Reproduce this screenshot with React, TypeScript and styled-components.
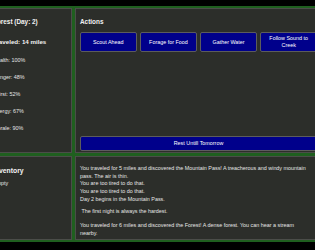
import styled, { createGlobalStyle } from "styled-components";

const GlobalStyle = createGlobalStyle`
  html, body {
    margin: 0;
    background: #000;
    overflow: hidden;
  }
  body {
    font-family: "Liberation Sans", Arial, sans-serif;
    color: #e6e6e6;
  }
`;

const Board = styled.div`
  box-sizing: border-box;
  width: 338px;
  margin: 6px 0 0 -14px;
  padding: 2px;
  display: grid;
  grid-template-columns: 84px 247px;
  grid-template-rows: 145px 84px;
  gap: 3px;
  background: #1f5f1f;
`;

const Panel = styled.section<{ $padBottom?: number; $padRight?: number; $end?: boolean }>`
  box-sizing: border-box;
  min-width: 0;
  min-height: 0;
  border: 1px solid #4b4d49;
  background: #2c2e2a;
  padding: 4px ${(p) => p.$padRight ?? 4}px ${(p) => p.$padBottom ?? 4}px 4px;
  display: flex;
  flex-direction: column;
  justify-content: ${(p) => (p.$end ? "flex-end" : "flex-start")};
  overflow: hidden;
`;

const Title = styled.div<{ $size?: number; $top?: number }>`
  font-size: ${(p) => p.$size ?? 6.4}px;
  font-weight: bold;
  line-height: 8px;
  color: #f2f2f2;
  margin-top: ${(p) => p.$top ?? 5.3}px;
  white-space: nowrap;
`;

const StatList = styled.div`
  margin-top: 6.2px;
`;

const Stat = styled.div`
  font-size: 5.4px;
  line-height: 17px;
  white-space: nowrap;
`;

const Note = styled.div`
  font-size: 5.4px;
  line-height: 7.5px;
  margin-top: 5.5px;
`;

const ActionRow = styled.div`
  margin-top: 5.7px;
  display: grid;
  grid-template-columns: repeat(4, 1fr);
  gap: 3.5px;
`;

const ActionButton = styled.button`
  height: 20px;
  box-sizing: border-box;
  background: #00008b;
  border: 1px solid #5c5c5c;
  border-radius: 2px;
  color: #fff;
  font-family: inherit;
  font-size: 5.4px;
  line-height: 6.5px;
  padding: 0 4px;
`;

const RestButton = styled(ActionButton)`
  height: 15px;
  margin-top: auto;
`;

const LogList = styled.div`
  flex-shrink: 0;
  display: flex;
  flex-direction: column;
`;

const Entry = styled.div<{ $gap?: number }>`
  font-size: 5.4px;
  line-height: 7.5px;
  white-space: pre-wrap;
  margin-top: ${(p) => p.$gap ?? 0}px;
`;

const stats = ["Health: 100%", "Hunger: 48%", "Thirst: 52%", "Energy: 67%", "Morale: 90%"];
const actions = ["Scout Ahead", "Forage for Food", "Gather Water", "Follow Sound to Creek"];

const log = [
  { text: "You set off along the winding trail and climbed the ridge, gaining height quickly as the morning passed by.", gap: 0 },
  { text: "You traveled for 5 miles and discovered the Mountain Pass! A treacherous and windy mountain pass. The air is thin.", gap: 7.8 },
  { text: "You are too tired to do that.", gap: 0 },
  { text: "You are too tired to do that.", gap: 0.3 },
  { text: "Day 2 begins in the Mountain Pass.", gap: 0.5 },
  { text: " The first night is always the hardest.", gap: 4.8 },
  { text: "You traveled for 6 miles and discovered the Forest! A dense forest. You can hear a stream nearby.", gap: 6.2 },
];

export default function App() {
  return (
    <>
      <GlobalStyle />
      <Board>
        <Panel>
          <Title>Forest (Day: 2)</Title>
          <Title $size={6.2} $top={11.7}>Traveled: 14 miles</Title>
          <StatList>
            {stats.map((s) => (
              <Stat key={s}>{s}</Stat>
            ))}
          </StatList>
        </Panel>
        <Panel $padBottom={1}>
          <Title>Actions</Title>
          <ActionRow>
            {actions.map((a) => (
              <ActionButton key={a}>{a}</ActionButton>
            ))}
          </ActionRow>
          <RestButton>Rest Untill Tomorrow</RestButton>
        </Panel>
        <Panel>
          <Title $size={6.8} $top={5.7}>Inventory</Title>
          <Note>Empty</Note>
        </Panel>
        <Panel $padBottom={2} $padRight={10} $end>
          <LogList>
            {log.map((e, i) => (
              <Entry key={i} $gap={e.gap}>
                {e.text}
              </Entry>
            ))}
          </LogList>
        </Panel>
      </Board>
    </>
  );
}
